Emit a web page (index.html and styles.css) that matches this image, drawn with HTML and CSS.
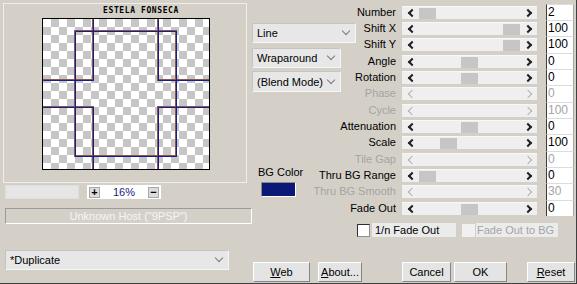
FILE: index.html
```html
<!DOCTYPE html>
<html lang="en">
  <head>
    <meta charset="UTF-8" />
    <meta name="viewport" content="width=device-width, initial-scale=1.0" />
    <title>Tile Effect</title>
    <link rel="stylesheet" href="styles.css">
  </head>
  <body>
    <div class="dialog">
      <div class="left">
        <div class="panel">
          <div class="brand">ESTELA FONSECA</div>
          <div class="canvas">
            <svg width="166" height="150" viewBox="0 0 166 150">
              <g fill="none" stroke="#86584e" stroke-width="2">
                <path d="M32 12 H133 V137 H32 Z" />
                <path d="M50 0 V61 H0" />
                <path d="M115 0 V61 H166" />
                <path d="M0 88 H50 V150" />
                <path d="M166 88 H115 V150" />
              </g>
              <g fill="none" stroke="#1c1c88" stroke-width="1" transform="translate(0.5 0.5)">
                <path d="M32 12 H133 V137 H32 Z" />
                <path d="M50 0 V61 H0" />
                <path d="M115 0 V61 H166" />
                <path d="M0 88 H50 V150" />
                <path d="M166 88 H115 V150" />
              </g>
            </svg>
          </div>
        </div>
        <div class="zoom-row">
          <div class="blank-field"></div>
          <div class="zoom">
            <span class="zbtn">+</span>
            <span class="zval">16%</span>
            <span class="zbtn">&minus;</span>
          </div>
        </div>
        <div class="host">Unknown Host ("9PSP")</div>
        <div class="select preset">*Duplicate</div>
      </div>

      <div class="right">
        <div class="params">
          <div class="controls">
            <div class="select line">Line</div>
            <div class="select wrap">Wraparound</div>
            <div class="select blend">(Blend Mode)</div>
            <div class="bgcolor">
              <div>BG Color</div>
              <div class="swatch"></div>
            </div>
          </div>

          <div class="lbl">Number</div>
          <div class="slider"><span class="arr l"></span><span class="track"><span class="thumb" style="margin-left:0px"></span></span><span class="arr r"></span></div>
          <div class="val">2</div>

          <div class="lbl">Shift X</div>
          <div class="slider"><span class="arr l"></span><span class="track"><span class="thumb" style="margin-left:84px"></span></span><span class="arr r"></span></div>
          <div class="val">100</div>

          <div class="lbl">Shift Y</div>
          <div class="slider"><span class="arr l"></span><span class="track"><span class="thumb" style="margin-left:84px"></span></span><span class="arr r"></span></div>
          <div class="val">100</div>

          <div class="lbl">Angle</div>
          <div class="slider"><span class="arr l"></span><span class="track"><span class="thumb" style="margin-left:42px"></span></span><span class="arr r"></span></div>
          <div class="val">0</div>

          <div class="lbl">Rotation</div>
          <div class="slider"><span class="arr l"></span><span class="track"><span class="thumb" style="margin-left:42px"></span></span><span class="arr r"></span></div>
          <div class="val">0</div>

          <div class="lbl off">Phase</div>
          <div class="slider off"><span class="arr l"></span><span class="track"></span><span class="arr r"></span></div>
          <div class="val off">0</div>

          <div class="lbl off">Cycle</div>
          <div class="slider off"><span class="arr l"></span><span class="track"></span><span class="arr r"></span></div>
          <div class="val off">100</div>

          <div class="lbl">Attenuation</div>
          <div class="slider"><span class="arr l"></span><span class="track"><span class="thumb" style="margin-left:42px"></span></span><span class="arr r"></span></div>
          <div class="val">0</div>

          <div class="lbl">Scale</div>
          <div class="slider"><span class="arr l"></span><span class="track"><span class="thumb" style="margin-left:21px"></span></span><span class="arr r"></span></div>
          <div class="val">100</div>

          <div class="lbl off">Tile Gap</div>
          <div class="slider off"><span class="arr l"></span><span class="track"></span><span class="arr r"></span></div>
          <div class="val off">0</div>

          <div class="lbl">Thru BG Range</div>
          <div class="slider"><span class="arr l"></span><span class="track"><span class="thumb" style="margin-left:0px"></span></span><span class="arr r"></span></div>
          <div class="val">0</div>

          <div class="lbl off">Thru BG Smooth</div>
          <div class="slider off"><span class="arr l"></span><span class="track"></span><span class="arr r"></span></div>
          <div class="val off">30</div>

          <div class="lbl">Fade Out</div>
          <div class="slider"><span class="arr l"></span><span class="track"><span class="thumb" style="margin-left:42px"></span></span><span class="arr r"></span></div>
          <div class="val">0</div>
        </div>

        <div class="checks">
          <div class="check"><span class="cbox"></span><span class="ctext first">1/n Fade Out</span></div>
          <div class="check off"><span class="cbox"></span><span class="ctext second">Fade Out to BG</span></div>
        </div>

        <div class="buttons">
          <button class="btn web"><u>W</u>eb</button>
          <button class="btn about"><u>A</u>bout...</button>
          <button class="btn cancel">Cancel</button>
          <button class="btn ok">OK</button>
          <button class="btn reset"><u>R</u>eset</button>
        </div>
      </div>
    </div>
  </body>
</html>
```

FILE: styles.css
```css
* {
  box-sizing: border-box;
}

body {
  margin: 0;
  width: 577px;
  height: 284px;
  overflow: hidden;
  background: #d4d0c8;
  color: #000;
  font-family: "Liberation Sans", Arial, sans-serif;
  font-size: 11px;
  border-right: 1px solid #404040;
  border-bottom: 1px solid #404040;
}

.dialog {
  display: flex;
}

/* left side: preview */

.left {
  width: 252px;
  display: flex;
  flex-direction: column;
}

.panel {
  margin: 3px 0 0 3px;
  width: 244px;
  height: 180px;
  border: 1px solid #f0eee9;
}

.brand {
  height: 14px;
  line-height: 13px;
  padding-left: 32px;
  text-align: center;
  font-family: "DejaVu Sans Mono", monospace;
  font-weight: bold;
  font-size: 8px;
  letter-spacing: 0.6px;
}

.canvas {
  margin-left: 38px;
  width: 168px;
  height: 152px;
  border: 1px solid #000;
  background: repeating-conic-gradient(#c6c6c6 0 25%, #fff 0 50%) 0 0 / 16px 16px;
}

.canvas svg {
  display: block;
}

.zoom-row {
  display: flex;
  margin-top: 2px;
  padding-left: 5px;
}

.blank-field {
  width: 74px;
  height: 14px;
  background: #e6e6e6;
  border: 1px solid #dedede;
}

.zoom {
  margin-left: 8px;
  width: 74px;
  height: 14px;
  background: #fff;
  display: flex;
  align-items: center;
  justify-content: space-between;
  padding: 0 2px;
}

.zbtn {
  width: 11px;
  height: 11px;
  background: #dcdcdc;
  border: 1px solid #a8a8a8;
  font-weight: bold;
  font-size: 11px;
  line-height: 9px;
  text-align: center;
}

.zval {
  color: #1a1a80;
  font-size: 11px;
}

.host {
  margin: 9px 0 0 5px;
  width: 247px;
  height: 16px;
  border: 1px solid;
  border-color: #9a9a9a #fff #fff #9a9a9a;
  color: #f4f4f4;
  text-align: center;
  line-height: 14px;
}

.select {
  height: 20px;
  display: flex;
  align-items: center;
  justify-content: space-between;
  padding: 0 6px 0 4px;
  background: #e7e7e7;
  border: 1px solid;
  border-color: #c4c4c4 #f6f6f6 #f6f6f6 #c4c4c4;
  white-space: nowrap;
}

.select::after {
  content: "";
  width: 5px;
  height: 5px;
  margin-top: -4px;
  border-right: 1px solid #7a7a7a;
  border-bottom: 1px solid #7a7a7a;
  transform: rotate(45deg);
}

.preset {
  margin: 26px 0 0 5px;
  width: 224px;
}

/* right side: parameters */

.right {
  flex: 1;
  display: flex;
  flex-direction: column;
}

.params {
  display: grid;
  grid-template-columns: 60px 90px 144px 28px;
  grid-template-rows: 16px 16px 17px 16px 16px 17px 16px 16px 17px 16px 16px 17px 16px;
  padding-top: 4px;
}

.controls {
  grid-column: 1;
  grid-row: 1 / span 13;
  display: flex;
  flex-direction: column;
  align-items: flex-start;
  padding-top: 19px;
}

.line {
  width: 104px;
  margin-bottom: 5px;
}

.wrap {
  width: 89px;
  margin-bottom: 3px;
}

.blend {
  width: 89px;
  height: 21px;
}

.bgcolor {
  margin-top: 74px;
  padding-left: 6px;
  line-height: 13px;
}

.swatch {
  margin: 3px 0 0 3px;
  width: 35px;
  height: 15px;
  background: #0c1878;
  border: 1px solid;
  border-color: #8a8a8a #fff #fff #8a8a8a;
}

.lbl {
  align-self: start;
  text-align: right;
  padding-right: 6px;
  white-space: nowrap;
  line-height: 16px;
}

.off {
  color: #a4a4a4;
}

.slider {
  align-self: start;
  margin-top: 2px;
  width: 135px;
  height: 13px;
  display: flex;
  background: #efefef;
  border-top: 1px solid #f8f8f8;
}

.arr {
  width: 17px;
  display: flex;
  align-items: center;
  justify-content: center;
}

.arr::before {
  content: "";
  width: 4px;
  height: 4px;
  border-left: 2px solid #202020;
  border-bottom: 2px solid #202020;
}

.arr.l::before {
  transform: rotate(45deg);
  margin-left: 2px;
}

.arr.r::before {
  transform: rotate(-135deg);
  margin-right: 2px;
}

.slider.off .arr::before {
  border-width: 0 0 1px 1px;
  border-color: #b0b0b0;
  width: 5px;
  height: 5px;
}

.track {
  flex: 1;
  display: flex;
  align-items: center;
}

.thumb {
  width: 17px;
  height: 11px;
  background: #c6c6c6;
}

.val {
  background: #fff;
  border-left: 1px solid #3c3c3c;
  border-right: 1px solid #a8a8a8;
  border-top: 1px solid #dcdcdc;
  padding-left: 1px;
  font-size: 12px;
  line-height: 15px;
}

.checks {
  display: flex;
  margin-top: 7px;
  padding-left: 105px;
  height: 14px;
}

.check {
  display: flex;
  align-items: center;
}

.cbox {
  width: 13px;
  height: 13px;
  background: #fff;
  border: 1px solid;
  border-color: #303030 #909090 #909090 #303030;
}

.check.off .cbox {
  background: #f0f0f0;
  border-color: #f0f0f0;
}

.ctext {
  height: 14px;
  line-height: 14px;
  background: #ebebeb;
  margin-left: 2px;
  padding-left: 3px;
  white-space: nowrap;
}

.ctext.first {
  width: 84px;
}

.ctext.second {
  width: 82px;
  margin-left: 1px;
  padding-left: 1px;
}

.check.off {
  margin-left: 6px;
}

.buttons {
  display: flex;
  margin-top: 25px;
  padding-left: 1px;
}

.btn {
  height: 20px;
  padding: 0;
  font-family: "Liberation Sans", Arial, sans-serif;
  font-size: 11px;
  color: #000;
  background: #e4e4e4;
  border: 1px solid;
  border-color: #fff #858585 #858585 #fff;
}

.web {
  width: 57px;
}

.about {
  width: 44px;
  margin-left: 8px;
}

.cancel {
  width: 49px;
  margin-left: 40px;
}

.ok {
  width: 53px;
  margin-left: 3px;
}

.reset {
  width: 48px;
  margin-left: 20px;
}
```
